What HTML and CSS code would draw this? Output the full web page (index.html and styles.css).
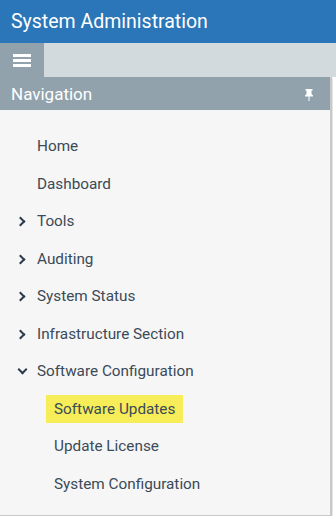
FILE: index.html
```html
<!DOCTYPE html>
<html lang="en">
<head>
  <meta charset="UTF-8" />
  <meta name="viewport" content="width=device-width, initial-scale=1.0"/>
  <title>System Administration</title>
  <link rel="stylesheet" href="styles.css">
</head>
<body>
  <header class="app-header">System Administration</header>

  <div class="toolbar">
    <button class="menu-btn" aria-label="Menu">
      <span></span><span></span><span></span>
    </button>
  </div>

  <div class="nav-panel">
    <div class="nav-title">
      <span>Navigation</span>
      <svg class="pin" width="10" height="12" viewBox="0 0 10 12">
        <path d="M1.5 0h7v1.5h-1v3.5l1.5 1.5v1h-3.5v4.5h-1v-4.5h-3.5v-1l1.5-1.5v-3.5h-1z" fill="#ffffff"/>
      </svg>
    </div>

    <ul class="nav-list">
      <li class="nav-item">Home</li>
      <li class="nav-item">Dashboard</li>
      <li class="nav-item has-children"><span class="chev right"></span>Tools</li>
      <li class="nav-item has-children"><span class="chev right"></span>Auditing</li>
      <li class="nav-item has-children"><span class="chev right"></span>System Status</li>
      <li class="nav-item has-children"><span class="chev right"></span>Infrastructure Section</li>
      <li class="nav-item has-children"><span class="chev down"></span>Software Configuration</li>
      <li class="nav-item sub"><span class="active">Software Updates</span></li>
      <li class="nav-item sub">Update License</li>
      <li class="nav-item sub">System Configuration</li>
    </ul>
  </div>
</body>
</html>
```

FILE: styles.css
```css
body {
  margin: 0;
  font-family: Roboto, "Liberation Sans", sans-serif;
  background: #ffffff;
  width: 336px;
}

.app-header {
  height: 43px;
  background: #2a76b9;
  color: #ffffff;
  font-size: 19.5px;
  line-height: 43px;
  padding-left: 11px;
}

.toolbar {
  height: 34px;
  background: #d3dadd;
  display: flex;
}

.menu-btn {
  width: 44px;
  height: 34px;
  border: none;
  padding: 0;
  background: #91a2ad;
  display: flex;
  flex-direction: column;
  align-items: center;
  justify-content: center;
  gap: 2px;
}

.menu-btn span {
  display: block;
  width: 18px;
  height: 3px;
  background: #ffffff;
}

.nav-panel {
  width: 330px;
  height: 438px;
  background: #f6f6f6;
  border-right: 2px solid #c9c9c9;
  border-bottom: 1px solid #c9c9c9;
  box-shadow: 1px 1px 0 #e4e4e4;
}

.nav-title {
  height: 33px;
  background: #91a2ad;
  color: #ffffff;
  font-size: 17px;
  display: flex;
  align-items: center;
  justify-content: space-between;
  padding: 0 16px 0 11px;
}

.pin {
  margin-top: 2px;
}

.nav-list {
  list-style: none;
  margin: 0;
  padding: 18px 0 0 0;
}

.nav-item {
  height: 37.5px;
  line-height: 37.5px;
  font-size: 15.3px;
  color: #3b4a57;
  padding-left: 37px;
  position: relative;
}

.nav-item.sub {
  padding-left: 54px;
}

.nav-item .active {
  display: inline-block;
  background: #f6ed58;
  line-height: 28px;
  padding: 0 8px;
  margin-left: -8px;
}

.chev {
  position: absolute;
  left: 20px;
  top: 15px;
  width: 5px;
  height: 5px;
  border-right: 2px solid #2c3c4c;
  border-bottom: 2px solid #2c3c4c;
}

.chev.right {
  transform: rotate(-45deg);
  left: 17px;
}

.chev.down {
  transform: rotate(45deg);
  top: 13px;
  left: 19px;
}
```
